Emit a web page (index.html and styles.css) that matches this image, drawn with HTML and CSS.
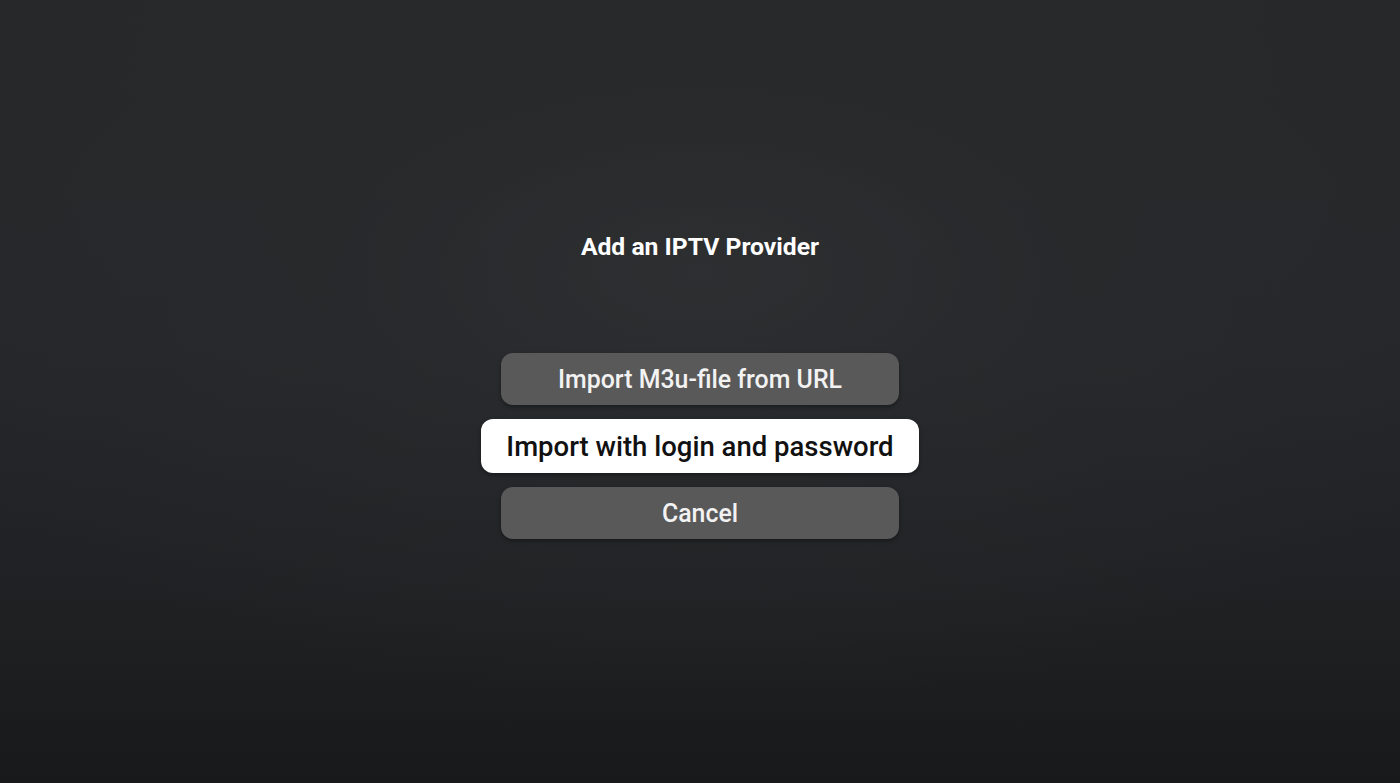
FILE: index.html
```html
<!DOCTYPE html>
<html lang="en">
<head>
<meta charset="utf-8">
<title>Add an IPTV Provider</title>
<link rel="stylesheet" href="styles.css">
</head>
<body>
<main class="screen">
  <h1 class="title">Add an IPTV Provider</h1>
  <div class="actions">
    <button class="btn">Import M3u-file from URL</button>
    <button class="btn btn-focused">Import with login and password</button>
    <button class="btn">Cancel</button>
  </div>
</main>
</body>
</html>
```
FILE: styles.css
```css
html, body {
  margin: 0;
  padding: 0;
  height: 100%;
}
body {
  background-color: #222426;
  background-image:
    radial-gradient(ellipse 60% 55% at 50% 35%, rgba(46,48,50,0.85) 0%, rgba(40,42,44,0.6) 45%, rgba(30,32,34,0) 100%),
    linear-gradient(180deg, #262829 0%, #25272a 45%, #1e2022 80%, #18191b 100%);
  font-family: Roboto, "Noto Sans", "Liberation Sans", sans-serif;
  overflow: hidden;
}
.screen {
  height: 783px;
  display: flex;
  flex-direction: column;
  align-items: center;
  padding-top: 232px;
  box-sizing: border-box;
}
.title {
  margin: 0;
  font-size: 24.7px;
  line-height: 30px;
  font-weight: 700;
  color: #ffffff;
}
.actions {
  margin-top: 91px;
  display: flex;
  flex-direction: column;
  align-items: center;
  gap: 14px;
}
.btn {
  width: 398px;
  height: 52px;
  border: none;
  border-radius: 12px;
  background: #595959;
  color: #f2f2f2;
  font-family: Roboto, "Noto Sans", "Liberation Sans", sans-serif;
  font-size: 24.9px;
  font-weight: 500;
  padding: 0;
  box-shadow: 0 2px 4px rgba(0,0,0,0.35);
  cursor: pointer;
}
.btn-focused {
  width: 438px;
  height: 54px;
  background: #ffffff;
  color: #111111;
  font-size: 27.5px;
}
```
